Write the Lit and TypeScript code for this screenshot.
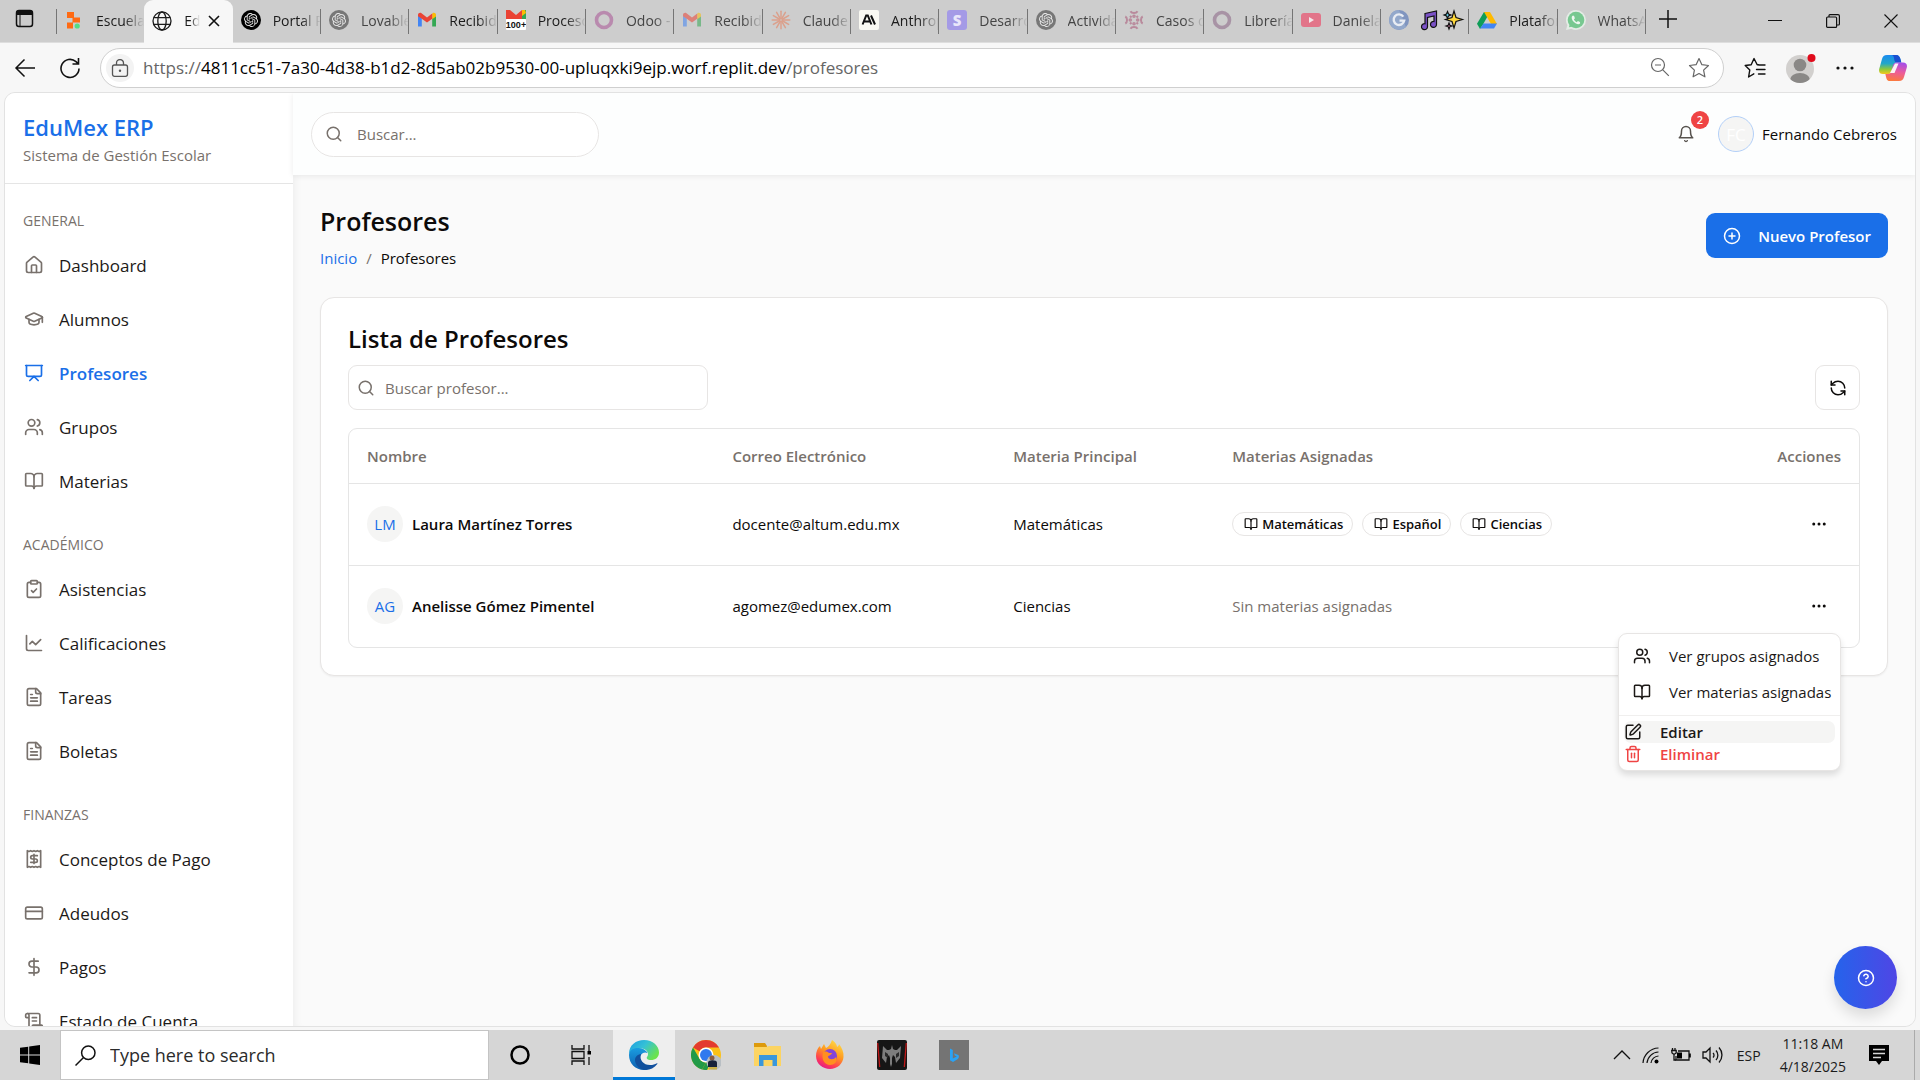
import { LitElement, html, svg, css, nothing, type TemplateResult } from "lit";
import { customElement, property, state } from "lit/decorators.js";
import { classMap } from "lit/directives/class-map.js";

/* ---------- Line icons (24 unit grid) ---------- */
const LINE: Record<string, TemplateResult> = {
  home: svg`<path d="M15 21v-8a1 1 0 0 0-1-1h-4a1 1 0 0 0-1 1v8"/><path d="M3 10a2 2 0 0 1 .709-1.528l7-5.999a2 2 0 0 1 2.582 0l7 5.999A2 2 0 0 1 21 10v9a2 2 0 0 1-2 2H5a2 2 0 0 1-2-2z"/>`,
  cap: svg`<path d="M21.42 10.922a1 1 0 0 0-.019-1.838L12.83 5.18a2 2 0 0 0-1.66 0L2.6 9.08a1 1 0 0 0 0 1.832l8.57 3.908a2 2 0 0 0 1.66 0z"/><path d="M22 10v6"/><path d="M6 12.5V16a6 3 0 0 0 12 0v-3.500"/>`,
  board: svg`<path d="M2 3h20"/><path d="M21 3v11a2 2 0 0 1-2 2H5a2 2 0 0 1-2-2V3"/><path d="m7 21 5-5 5 5"/>`,
  users: svg`<path d="M16 21v-2a4 4 0 0 0-4-4H6a4 4 0 0 0-4 4v2"/><circle cx="9" cy="7" r="4"/><path d="M22 21v-2a4 4 0 0 0-3-3.870"/><path d="M16 3.130a4 4 0 0 1 0 7.750"/>`,
  book: svg`<path d="M12 7v14"/><path d="M3 18a1 1 0 0 1-1-1V4a1 1 0 0 1 1-1h5a4 4 0 0 1 4 4 4 4 0 0 1 4-4h5a1 1 0 0 1 1 1v13a1 1 0 0 1-1 1h-6a3 3 0 0 0-3 3 3 3 0 0 0-3-3z"/>`,
  clipboard: svg`<rect width="8" height="4" x="8" y="2" rx="1"/><path d="M16 4h2a2 2 0 0 1 2 2v14a2 2 0 0 1-2 2H6a2 2 0 0 1-2-2V6a2 2 0 0 1 2-2h2"/><path d="m9 14 2 2 4-4"/>`,
  chart: svg`<path d="M3 3v16a2 2 0 0 0 2 2h16"/><path d="m7 13 3-3 4 4 6-6"/>`,
  file: svg`<path d="M15 2H6a2 2 0 0 0-2 2v16a2 2 0 0 0 2 2h12a2 2 0 0 0 2-2V7Z"/><path d="M14 2v4a2 2 0 0 0 2 2h4"/><path d="M10 9H8"/><path d="M16 13H8"/><path d="M16 17H8"/>`,
  receipt: svg`<path d="M4 2v20l2-1 2 1 2-1 2 1 2-1 2 1 2-1 2 1V2l-2 1-2-1-2 1-2-1-2 1-2-1-2 1Z"/><path d="M16 8h-6a2 2 0 1 0 0 4h4a2 2 0 1 1 0 4H8"/><path d="M12 17.500v-11"/>`,
  card: svg`<rect width="20" height="14" x="2" y="5" rx="2"/><path d="M2 10h20"/>`,
  dollar: svg`<path d="M12 2v20"/><path d="M17 5H9.500a3.500 3.500 0 0 0 0 7h5a3.500 3.500 0 0 1 0 7H6"/>`,
  scroll: svg`<path d="M15 12h-5"/><path d="M15 8h-5"/><path d="M19 17V5a2 2 0 0 0-2-2H4"/><path d="M8 21h12a2 2 0 0 0 2-2v-1a1 1 0 0 0-1-1H11a1 1 0 0 0-1 1v1a2 2 0 1 1-4 0V5a2 2 0 1 0-4 0v2a1 1 0 0 0 1 1h3"/>`,
  search: svg`<circle cx="11" cy="11" r="8"/><path d="m21 21-4.300-4.300"/>`,
  bell: svg`<path d="M6 8a6 6 0 0 1 12 0c0 7 3 9 3 9H3s3-2 3-9"/><path d="M10.300 21a1.940 1.940 0 0 0 3.400 0"/>`,
  plusCircle: svg`<circle cx="12" cy="12" r="10"/><path d="M8 12h8"/><path d="M12 8v8"/>`,
  refresh: svg`<path d="M21 12a9 9 0 0 0-9-9 9.750 9.750 0 0 0-6.740 2.740L3 8"/><path d="M3 3v5h5"/><path d="M3 12a9 9 0 0 0 9 9 9.750 9.750 0 0 0 6.740-2.740L21 16"/><path d="M16 16h5v5"/>`,
  dots: svg`<circle cx="12" cy="12" r="1"/><circle cx="19" cy="12" r="1"/><circle cx="5" cy="12" r="1"/>`,
  edit: svg`<path d="M12 3H5a2 2 0 0 0-2 2v14a2 2 0 0 0 2 2h14a2 2 0 0 0 2-2v-7"/><path d="M18.375 2.625a1 1 0 0 1 3 3l-9.013 9.014a2 2 0 0 1-.853.505l-2.873.84a.5.5 0 0 1-.62-.62l.84-2.873a2 2 0 0 1 .506-.852z"/>`,
  trash: svg`<path d="M3 6h18"/><path d="M19 6v14c0 1-1 2-2 2H7c-1 0-2-1-2-2V6"/><path d="M8 6V4c0-1 1-2 2-2h4c1 0 2 1 2 2v2"/><path d="M10 11v6"/><path d="M14 11v6"/>`,
  help: svg`<circle cx="12" cy="12" r="10"/><path d="M9.090 9a3 3 0 0 1 5.830 1c0 2-3 3-3 3"/><path d="M12 17h.01"/>`,
};

const line = (name: string, size = 18, weight = 2) => html`<svg
  width=${size} height=${size} viewBox="0 0 24 24" fill="none" stroke="currentColor"
  stroke-width=${weight} stroke-linecap="round" stroke-linejoin="round" aria-hidden="true">${LINE[name]}</svg>`;

/* ---------- Site marks in the tab strip (20 unit grid) ---------- */
const spin = (n: number, shape: TemplateResult) =>
  Array.from({ length: n }, (_, i) => svg`<g transform="rotate(${(360 / n) * i} 10 10)">${shape}</g>`);

const knot = (bg: string) => svg`<circle cx="10" cy="10" r="10" fill=${bg}/><path transform="translate(3 3) scale(.583)" fill="#e8e8e8" d="M22.2819 9.8211a5.9847 5.9847 0 0 0-.5157-4.9108 6.0462 6.0462 0 0 0-6.5098-2.9A6.0651 6.0651 0 0 0 4.9807 4.1818a5.9847 5.9847 0 0 0-3.9977 2.9 6.0462 6.0462 0 0 0 .7427 7.0966 5.98 5.98 0 0 0 .511 4.9107 6.051 6.051 0 0 0 6.5146 2.9001A5.9847 5.9847 0 0 0 13.2599 24a6.0557 6.0557 0 0 0 5.7718-4.2058 5.9894 5.9894 0 0 0 3.9977-2.9001 6.0557 6.0557 0 0 0-.7475-7.0729zm-9.022 12.6081a4.4755 4.4755 0 0 1-2.8764-1.0408l.1419-.0804 4.7783-2.7582a.7948.7948 0 0 0 .3927-.6813v-6.7369l2.02 1.1686a.071.071 0 0 1 .038.052v5.5826a4.504 4.504 0 0 1-4.4945 4.4944zm-9.6607-4.1254a4.4708 4.4708 0 0 1-.5346-3.0137l.142.0852 4.783 2.7582a.7712.7712 0 0 0 .7806 0l5.8428-3.3685v2.3324a.0804.0804 0 0 1-.0332.0615L9.74 19.9502a4.4992 4.4992 0 0 1-6.1408-1.6464zM2.3408 7.8956a4.485 4.485 0 0 1 2.3655-1.9728V11.6a.7664.7664 0 0 0 .3879.6765l5.8144 3.3543-2.0201 1.1685a.0757.0757 0 0 1-.071 0l-4.8303-2.7865A4.504 4.504 0 0 1 2.3408 7.872zm16.5963 3.8558L13.1038 8.364 15.1192 7.2a.0757.0757 0 0 1 .071 0l4.8303 2.7913a4.4944 4.4944 0 0 1-.6765 8.1042v-5.6772a.79.79 0 0 0-.407-.667zm2.0107-3.0231l-.142-.0852-4.7735-2.7818a.7759.7759 0 0 0-.7854 0L9.409 9.2297V6.8974a.0662.0662 0 0 1 .0284-.0615l4.8303-2.7866a4.4992 4.4992 0 0 1 6.6802 4.66zM8.3065 12.863l-2.02-1.1638a.0804.0804 0 0 1-.038-.0567V6.0742a4.4992 4.4992 0 0 1 7.3757-3.4537l-.142.0805L8.704 5.459a.7948.7948 0 0 0-.3927.6813zm1.0976-2.3654l2.602-1.4998 2.6069 1.4998v2.9994l-2.5974 1.4997-2.6067-1.4997Z"/>`;
const envelope = svg`<path d="M1 4.500v12h3.800V8.300z" fill="#4285f4"/><path d="M19 4.500v12h-3.800V8.300z" fill="#34a853"/><path d="M15.200 4.300v5L19 6.500V5c0-1.900-2.100-2.900-3.500-1.800z" fill="#fbbc04"/><path d="M1 5c0-1.900 2.100-2.900 3.500-1.800L10 7.400l5.200-4v5.300L10 12.600 4.800 8.700 1 6.300z" fill="#ea4335"/>`;

const MARK: Record<string, TemplateResult> = {
  blocks: svg`<path d="M3 2h7v6H3zM8.500 7.500H16v5H8.500zM3 12.500h6v6H3z" fill="#ff6a13"/><circle cx="13.200" cy="16" r="2.600" fill="#54dd84"/>`,
  globe: svg`<g fill="none" stroke="#1b1b1b" stroke-width="1.300"><circle cx="10" cy="10" r="9"/><ellipse cx="10" cy="10" rx="4.200" ry="9"/><path d="M1.800 6.700h16.400M1.800 13.300h16.400"/></g>`,
  knot: knot("#000"),
  knotDim: knot("#777"),
  mail: envelope,
  mailBadge: svg`<path d="M0 0h4l6 5 6-5h4v9H0z" fill="#ea4335"/><path d="M16 0h4v9h-4z" fill="#34a853"/><path d="M16 0h3l1 3-4 3z" fill="#fbbc04"/><rect y="9" width="20" height="11" rx="1" fill="#fff"/><text x="10" y="18" font-size="9" font-weight="700" text-anchor="middle" font-family="Liberation Sans, sans-serif" fill="#111">100+</text>`,
  ring: svg`<circle cx="10" cy="10" r="7.500" fill="none" stroke="#b98aae" stroke-width="3.600"/>`,
  ringDim: svg`<circle cx="10" cy="10" r="7.500" fill="none" stroke="#a893a5" stroke-width="3.600"/>`,
  burst: svg`<g stroke="#dba08c" stroke-width="1.500" stroke-linecap="round">${spin(12, svg`<path d="M10 8.500V1.200"/>`)}</g>`,
  anthropic: svg`<rect width="20" height="20" rx="2" fill="#faf9f2"/><path d="M3.600 14.500 7.200 5.500h1.600l3.600 9M5 11.500h6M12 5.500l4 9" fill="none" stroke="#111" stroke-width="2"/>`,
  letterS: svg`<rect width="20" height="20" rx="3" fill="#a49ae6"/><text x="10" y="15.500" font-size="15" font-weight="800" text-anchor="middle" font-family="Open Sans, sans-serif" fill="#e9e6fa">S</text>`,
  lattice: svg`<g fill="none" stroke="#b98a9c" stroke-width="2">${spin(4, svg`<path d="M6.500 1.300c1.200 2.300 5.800 2.300 7 0"/><circle cx="10" cy="6.300" r=".8"/>`)}<path d="m6 6 1.500 1.500M14 6l-1.500 1.500M6 14l1.500-1.500M14 14l-1.500-1.500"/></g>`,
  video: svg`<rect y="3" width="20" height="14" rx="3" fill="#e27489"/><path d="m8 7 5 3-5 3z" fill="#f4e6e8"/>`,
  letterG: svg`<circle cx="10" cy="10" r="10" fill="#8095bf"/><path d="M10 0a10 10 0 0 0-7 17A10 10 0 0 0 17 17z" fill="#93a8cb"/><path d="M14.300 6.600A5.300 5.300 0 1 0 15.200 10.600H10.500" fill="none" stroke="#e8ecf3" stroke-width="2.400"/>`,
  drive: svg`<path d="M7 2h6L6 14.500 3 19 0 13.800z" fill="#0f9d58"/><path d="M7 2h6l7 12h-6z" fill="#ffba00"/><path d="M6.500 13.500H20L17 18.500H3z" fill="#4285f4"/>`,
  chat: svg`<path d="M10 0a10 10 0 0 1 0 20c-1.700 0-3.300-.4-4.700-1.200L0 20l1.400-4.900A10 10 0 0 1 10 0z" fill="#e3ece5"/><circle cx="10" cy="10" r="8.300" fill="#77c890"/><path d="M3 17.200 3.800 13.500 7 16.500z" fill="#77c890"/><path d="M7 5.500c-2 1-1.500 4 .7 6.300s5.200 3.300 6.500 1.500l-.3-1.200-2-1-1.200 1.100c-1.200-.5-2.300-1.600-2.800-2.700l1-1.200-.8-2.300z" fill="#eef7f0"/>`,
};
const mark = (name: string) => html`<svg class="mark" width="20" height="20" viewBox="0 0 20 20" aria-hidden="true">${MARK[name]}</svg>`;

interface Tab { icon: string; label: string | TemplateResult; dim?: boolean; active?: boolean; faded?: boolean }
const music = html`<svg class="emoji" width="46" height="22" viewBox="0 0 46 22" aria-label="🎵✨"><g stroke="#111" stroke-width="1.200"><path d="M6 4.500 17.500 2v13.500a3 3 0 1 1-2.500-3V7L8.500 8.500v9.200a3 3 0 1 1-2.500-3z" fill="#7b52c7"/><path d="m35 2 2 6.500 6.500 2-6.500 2-2 6.500-2-6.500-6.500-2 6.500-2z" fill="#ffd83a"/><path d="m28.500 2.500 1 2.500 2.500 1-2.500 1-1 2.500-1-2.500L25 6l2.500-1z" fill="#66d4ef"/><path d="m30 14 .8 2.200 2.200.8-2.200.8-.8 2.200-.8-2.200L27 17l2.200-.8z" fill="#ff8fc1"/></g></svg>`;
const TABS: Tab[] = [
  { icon: "blocks", label: "Escuela" },
  { icon: "globe", label: "EduMex", active: true },
  { icon: "knot", label: "Portal P" },
  { icon: "knotDim", label: "Lovable", dim: true },
  { icon: "mail", label: "Recibidos" },
  { icon: "mailBadge", label: "Proceso" },
  { icon: "ring", label: "Odoo - ", dim: true },
  { icon: "mail", label: "Recibidos", dim: true, faded: true },
  { icon: "burst", label: "Claude", dim: true },
  { icon: "anthropic", label: "Anthropic" },
  { icon: "letterS", label: "Desarrollo", dim: true },
  { icon: "knotDim", label: "Actividad", dim: true },
  { icon: "lattice", label: "Casos de", dim: true },
  { icon: "ringDim", label: "Librería", dim: true },
  { icon: "video", label: "Daniela", dim: true },
  { icon: "letterG", label: music },
  { icon: "drive", label: "Plataforma" },
  { icon: "chat", label: "WhatsApp", dim: true },
];

const NAV = [
  { title: "GENERAL", items: [["home", "Dashboard"], ["cap", "Alumnos"], ["board", "Profesores"], ["users", "Grupos"], ["book", "Materias"]] },
  { title: "ACADÉMICO", items: [["clipboard", "Asistencias"], ["chart", "Calificaciones"], ["file", "Tareas"], ["file", "Boletas"]] },
  { title: "FINANZAS", items: [["receipt", "Conceptos de Pago"], ["card", "Adeudos"], ["dollar", "Pagos"], ["scroll", "Estado de Cuenta"]] },
];

const TEACHERS = [
  { initials: "LM", name: "Laura Martínez Torres", mail: "docente@altum.edu.mx", main: "Matemáticas", subjects: ["Matemáticas", "Español", "Ciencias"] },
  { initials: "AG", name: "Anelisse Gómez Pimentel", mail: "agomez@edumex.com", main: "Ciencias", subjects: [] as string[] },
];

const reset = css`
  *, *::before, *::after { box-sizing: border-box; }
  svg { display: block; flex: none; }
  button { font: inherit; color: inherit; border: 0; padding: 0; background: none; cursor: pointer; }
  input { font: inherit; color: inherit; border: 0; padding: 0; background: none; outline: 0; min-width: 0; }
  a { color: inherit; text-decoration: none; }
  h1, h2, p, ul { margin: 0; padding: 0; font-weight: inherit; }
  ul { list-style: none; }
`;

/* ---------- Browser chrome ---------- */
@customElement("browser-chrome")
class BrowserChrome extends LitElement {
  static styles = [reset, css`
    :host { display: block; background: #f7f7f7; color: #1b1b1b; }
    .strip { display: flex; height: 43px; background: #cdcdcd; border-bottom: 1px solid #dedede; }
    .workspaces { width: 56px; display: flex; align-items: center; padding: 0 0 4px 15px; }
    .tabs { display: flex; flex: 0 1 1590px; min-width: 0; }
    .tab { display: flex; align-items: center; gap: 12px; flex: 1 1 0; min-width: 0; height: 42px; padding: 0 0 2px 8px; font-size: 14px; position: relative; }
    .tab:not(.active)::after { content: ""; position: absolute; right: 0; top: 9px; width: 1px; height: 25px; background: #757575; }
    .tab:first-child::after { right: auto; left: 0; }
    .label { flex: 1; min-width: 0; overflow: hidden; white-space: nowrap; mask-image: linear-gradient(to right, #000 calc(100% - 20px), transparent); }
    .dim .label { color: #444; }
    .faded .mark { opacity: .55; }
    .emojis .label { mask-image: none; margin-right: -4px; }
    .emojis { gap: 10px; }
    .active { background: #f7f7f7; border-radius: 9px 9px 0 0; height: 43px; }
    .active .label { mask-image: linear-gradient(to right, #000 6px, transparent); flex: 0 0 16px; }
    .active .x { margin-left: -4px; }
    .new { width: 44px; display: grid; place-items: center; padding-bottom: 4px; }
    .window { margin-left: auto; display: flex; }
    .window button { width: 58px; display: grid; place-items: center; }
    .bar { display: flex; align-items: center; height: 49px; padding: 0 13px 0 14px; }
    .nav { display: flex; gap: 23px; margin-right: 19px; }
    .address { flex: 1; display: flex; align-items: center; height: 40px; border: 1px solid #cfcfcf; border-radius: 20px; background: #fff; padding: 0 13px 0 5px; }
    .lock { width: 28px; height: 28px; border-radius: 50%; background: #f3f3f3; display: grid; place-items: center; margin-right: 9px; }
    .url { flex: 1; font-size: 17px; color: #000; white-space: nowrap; }
    .url span { color: #666; }
    .in { display: flex; gap: 18px; color: #666; }
    .out { display: flex; align-items: center; gap: 20px; margin-left: 20px; }
    .out button:last-child { margin-left: 5px; }
  `];
  render() {
    return html`
      <div class="strip">
        <button class="workspaces" aria-label="Workspaces"><svg width="20" height="20" viewBox="0 0 20 20"><rect x="1.500" y="1.500" width="16" height="16" rx="2.500" fill="none" stroke="#111" stroke-width="1.500"/><path d="M1.500 6V3.500a2 2 0 0 1 2-2h12a2 2 0 0 1 2 2V6z" fill="#111"/><path d="M5 6v11" stroke="#111" stroke-width="1"/></svg></button>
        <div class="tabs" role="tablist">
          ${TABS.map((t) => html`<div role="tab" class=${classMap({ tab: true, dim: !!t.dim, active: !!t.active, faded: !!t.faded, emojis: t.icon === "letterG" })}>
            ${mark(t.icon)}<span class="label">${t.label}</span>
            ${t.active ? html`<button class="x" aria-label="Close tab"><svg width="12" height="12" viewBox="0 0 12 12"><path d="m1 1 10 10M11 1 1 11" stroke="#111" stroke-width="1.600"/></svg></button>` : nothing}
          </div>`)}
        </div>
        <button class="new" aria-label="New tab"><svg width="18" height="18" viewBox="0 0 18 18"><path d="M9 0v18M0 9h18" stroke="#111" stroke-width="1.500"/></svg></button>
        <div class="window">
          <button aria-label="Minimize"><svg width="14" height="14" viewBox="0 0 14 14"><path d="M0 6.500h14" stroke="#111"/></svg></button>
          <button aria-label="Restore"><svg width="14" height="14" viewBox="0 0 14 14"><g fill="none" stroke="#111" stroke-width="1.200"><rect x=".6" y="3" width="10" height="10.400" rx="1"/><path d="M3 3V1.500c0-.6.4-.9.900-.9H12c.8 0 1.400.6 1.400 1.400v8c0 .6-.3 1-.9 1h-1.900"/></g></svg></button>
          <button aria-label="Close"><svg width="14" height="14" viewBox="0 0 14 14"><path d="m.5.5 13 13m0-13-13 13" stroke="#111" stroke-width="1.100"/></svg></button>
        </div>
      </div>
      <div class="bar">
        <div class="nav">
          <button aria-label="Back"><svg width="22" height="22" viewBox="0 0 22 22"><path d="M21 11H2m8.500-8.500L2 11l8.500 8.500" fill="none" stroke="#111" stroke-width="1.500"/></svg></button>
          <button aria-label="Reload"><svg width="22" height="22" viewBox="0 0 22 22"><path d="M20 11.500A9 9 0 1 1 17 4.700l2.300 2.100M19.500 1v6h-6" fill="none" stroke="#111" stroke-width="1.600"/></svg></button>
        </div>
        <div class="address">
          <span class="lock"><svg width="18" height="18" viewBox="0 0 18 18"><g fill="none" stroke="#555" stroke-width="1.300"><rect x="1.500" y="6" width="15" height="11.300" rx="2"/><path d="M5.500 6V4a3.500 3.500 0 0 1 7 0v2"/></g><circle cx="9" cy="11.700" r="1.200" fill="#555"/></svg></span>
          <span class="url"><span>https://</span>4811cc51-7a30-4d38-b1d2-8d5ab02b9530-00-upluqxki9ejp.worf.replit.dev<span>/profesores</span></span>
          <span class="in">
            <svg width="20" height="20" viewBox="0 0 20 20"><g fill="none" stroke="#666" stroke-width="1.200"><circle cx="8" cy="8" r="6.500"/><path d="m12.800 12.800 6 6M5 8h6"/></g></svg>
            <svg width="22" height="22" viewBox="0 0 22 22"><path d="m11 1.500 2.900 6.200 6.600.8-4.900 4.600 1.300 6.700-5.900-3.300-5.900 3.300 1.300-6.700L1.500 8.500l6.600-.8z" fill="none" stroke="#666" stroke-width="1.200" stroke-linejoin="round"/></svg>
          </span>
        </div>
        <div class="out">
          <button aria-label="Favorites"><svg width="22" height="22" viewBox="0 0 22 22"><g fill="none" stroke="#111" stroke-width="1.400" stroke-linejoin="round" stroke-linecap="round"><path d="M14.500 7.700h-1.300L10 1.500 7.200 7.700l-6 .8 4.600 4.400L4.600 20l5.200-3.200"/><path d="M15 8h6M12.500 12.500H21M14.500 17H21"/></g></svg></button>
          <button aria-label="Profile"><svg width="30" height="32" viewBox="0 0 30 32"><circle cx="14" cy="17" r="14" fill="#d2d0ce"/><clipPath id="pc"><circle cx="14" cy="17" r="14"/></clipPath><g clip-path="url(#pc)" fill="#8a8886"><circle cx="14" cy="13" r="6.300"/><ellipse cx="14" cy="28" rx="10" ry="7"/></g><circle cx="25.500" cy="6" r="4" fill="#e00b1c"/></svg></button>
          <button aria-label="Settings"><svg width="18" height="4" viewBox="0 0 18 4"><g fill="#111"><circle cx="2" cy="2" r="1.600"/><circle cx="9" cy="2" r="1.600"/><circle cx="16" cy="2" r="1.600"/></g></svg></button>
          <button aria-label="Copilot"><svg width="28" height="26" viewBox="0 0 28 26">
            <defs><linearGradient id="ca" x1="0" y1="0" x2="0" y2="1"><stop offset="0" stop-color="#1b8af0"/><stop offset=".45" stop-color="#22a7c9"/><stop offset=".75" stop-color="#8fc93a"/><stop offset="1" stop-color="#f5c81c"/></linearGradient>
            <linearGradient id="cb" x1=".6" y1="0" x2=".4" y2="1"><stop offset="0" stop-color="#a64de8"/><stop offset=".5" stop-color="#ec5c9b"/><stop offset="1" stop-color="#fb7a3c"/></linearGradient></defs>
            <path d="M8 0h9c3 0 4 2 4.700 5l.6 2.500H19c-2.500 0-3.700 1-4.200 3L13 16c-.6 2-1.500 3-3.500 3H4c-3 0-4.500-2-3.800-5L3 4c.8-2.700 2-4 5-4z" fill="url(#ca)"/>
            <path d="M13 0h4c3 0 4 2 4.700 5l.6 2.500H18c-1.500 0-2.300-.8-2.700-2.500L15 3c-.4-1.800-.9-2.600-2-3z" fill="#1a4fd0"/>
            <path d="M20 26h-9c-3 0-3.500-2-4.200-5L6.400 19H9c2 0 3-1 3.500-3L14 10.500c.6-2 1.300-3 3.200-3H24c3 0 4.500 2 3.800 5L25 22c-.8 2.700-2 4-5 4z" fill="url(#cb)"/>
            <path d="M16 8.500h3.500L15.500 18H11z" fill="#fbf4f6"/></svg></button>
        </div>
      </div>`;
  }
}

/* ---------- Sidebar ---------- */
@customElement("side-nav")
class SideNav extends LitElement {
  @property() current = "Profesores";
  static styles = [reset, css`
    :host { display: block; background: #fff; overflow: hidden; min-height: 0; }
    .brand { height: 91px; padding: 18px 18px 0; border-bottom: 1px solid #e5e5e5; }
    .brand h1 { font-size: 22px; line-height: 32px; font-weight: 600; color: #1a6fe8; }
    .brand p { font-size: 15px; line-height: 24px; color: #78716c; }
    h2 { font-size: 14px; line-height: 20px; padding: 27px 18px 7px; color: #78716c; }
    a { display: flex; align-items: center; gap: 15px; height: 54px; padding: 0 19px; font-size: 17px; color: #1c1917; }
    a svg { color: #78716c; }
    .on { color: #1a6fe8; font-weight: 600; }
    .on svg { color: #1a6fe8; }
  `];
  render() {
    return html`
      <div class="brand"><h1>EduMex ERP</h1><p>Sistema de Gestión Escolar</p></div>
      <nav>${NAV.map((g) => html`<h2>${g.title}</h2><ul>${g.items.map(([icon, text]) => html`<li>
        <a href="#" class=${classMap({ on: text === this.current })}>${line(icon, 20)}${text}</a></li>`)}</ul>`)}</nav>`;
  }
}

/* ---------- Teachers page ---------- */
@customElement("teachers-page")
class TeachersPage extends LitElement {
  @state() private open = 1;
  static styles = [reset, css`
    :host { display: flex; flex-direction: column; min-width: 0; background: #fafafa; font-size: 15px; color: #0c0a09; position: relative; box-shadow: inset 8px 0 8px -6px rgba(0, 0, 0, .05); }
    .top { display: flex; align-items: center; height: 82px; padding: 0 18px; background: #fdfefe; box-shadow: 0 1px 6px rgba(0, 0, 0, .08); }
    .find { display: flex; align-items: center; height: 45px; border: 1px solid #e7e5e4; background: #fff; color: #78716c; }
    .find input { flex: 1; }
    .find input::placeholder { color: #78716c; opacity: 1; }
    .find.round { width: 288px; border-radius: 23px; padding: 0 13px; gap: 14px; }
    .find.box { width: 360px; border-radius: 9px; padding: 0 8px; gap: 10px; }
    .user { margin-left: auto; display: flex; align-items: center; gap: 8px; }
    .bell { position: relative; width: 36px; height: 36px; display: grid; place-items: center; margin-right: 6px; color: #57534e; }
    .count { position: absolute; top: -5px; right: -5px; width: 18px; height: 18px; border-radius: 50%; background: #ef4444; color: #fff; font-size: 11px; line-height: 18px; font-weight: 600; }
    .face { flex: none; width: 36px; height: 36px; border-radius: 50%; background: #f5f5f4; color: #1a6fe8; display: grid; place-items: center; }
    .user .face { color: #fff; border: 1px solid #b3d0f8; font-size: 17px; }
    main { padding: 26px 27px; }
    .head { display: flex; justify-content: space-between; align-items: center; margin-bottom: 27px; }
    .head h1 { font-size: 25px; line-height: 40px; font-weight: 600; }
    .crumbs { display: flex; gap: 9px; line-height: 24px; margin-top: 5px; }
    .crumbs a { color: #1a6fe8; }
    .crumbs i { font-style: normal; color: #78716c; }
    .primary { display: flex; align-items: center; gap: 17px; height: 45px; padding: 0 17px; border-radius: 9px; background: #1a6fe8; color: #fff; font-weight: 600; }
    .card { background: #fff; border: 1px solid #e7e5e4; border-radius: 14px; box-shadow: 0 1px 2px rgba(0, 0, 0, .05); padding: 21px 27px 27px; }
    .card h2 { font-size: 24px; line-height: 40px; font-weight: 600; margin-bottom: 6px; }
    .tools { display: flex; justify-content: space-between; margin-bottom: 18px; }
    .refresh { width: 45px; height: 45px; border: 1px solid #e7e5e4; border-radius: 9px; display: grid; place-items: center; }
    .frame { border: 1px solid #e5e5e5; border-radius: 9px; }
    table { width: 100%; border-collapse: collapse; table-layout: fixed; }
    th, td { text-align: left; padding: 0 18px; white-space: nowrap; }
    th { height: 54px; font-weight: 600; color: #78716c; }
    td { height: 82px; border-top: 1px solid #e5e5e5; }
    .c1 { width: 24.2%; } .c2 { width: 18.6%; } .c3 { width: 14.5%; }
    .act { text-align: right; }
    .person { display: flex; align-items: center; gap: 9px; font-weight: 600; }
    .person .face { font-weight: 400; }
    .badges { display: flex; gap: 9px; }
    .badge { display: flex; align-items: center; gap: 4px; height: 24px; padding: 0 9px 0 11px; border: 1px solid #e7e5e4; border-radius: 12px; font-size: 13px; font-weight: 600; }
    .muted { color: #78716c; }
    .spot { position: relative; display: inline-block; vertical-align: middle; }
    .more { width: 45px; height: 45px; display: grid; place-items: center; }
    .menu { position: absolute; z-index: 2; right: 0; top: 49px; width: 223px; padding: 4px 5px 5px; background: #fff; border: 1px solid #e7e5e4; border-radius: 9px; box-shadow: 0 4px 6px rgba(0, 0, 0, .12); text-align: left; }
    .menu button { display: flex; align-items: center; gap: 18px; width: 100%; height: 36px; padding: 0 9px; color: #1c1917; }
    .menu hr { height: 1px; border: 0; margin: 5px -5px; background: #f0efee; }
    .menu .tight { height: 22px; padding: 0; font-weight: 600; border-radius: 7px; }
    .menu .hover { background: #f5f5f4; }
    .menu .danger { color: #ef4444; }
    .fab { position: absolute; right: 18px; bottom: 17px; width: 63px; height: 63px; border-radius: 50%; background: linear-gradient(to right, #2563eb, #4f46e5); color: #fff; display: grid; place-items: center; box-shadow: 0 8px 14px rgba(0, 0, 0, .12); }
  `];
  render() {
    return html`
      <header class="top">
        <label class="find round">${line("search", 18)}<input type="search" placeholder="Buscar..." aria-label="Buscar" /></label>
        <div class="user">
          <button class="bell" aria-label="Notificaciones">${line("bell", 18)}<span class="count">2</span></button>
          <span class="face">FC</span><span>Fernando Cebreros</span>
        </div>
      </header>
      <main>
        <div class="head">
          <div><h1>Profesores</h1><nav class="crumbs"><a href="#">Inicio</a><i>/</i><span>Profesores</span></nav></div>
          <button class="primary">${line("plusCircle", 18)}Nuevo Profesor</button>
        </div>
        <section class="card">
          <h2>Lista de Profesores</h2>
          <div class="tools">
            <label class="find box">${line("search", 18)}<input type="search" placeholder="Buscar profesor..." aria-label="Buscar profesor" /></label>
            <button class="refresh" aria-label="Actualizar">${line("refresh", 18)}</button>
          </div>
          <div class="frame"><table>
            <thead><tr><th class="c1">Nombre</th><th class="c2">Correo Electrónico</th><th class="c3">Materia Principal</th><th>Materias Asignadas</th><th class="act">Acciones</th></tr></thead>
            <tbody>${TEACHERS.map((t, i) => html`<tr>
              <td><div class="person"><span class="face">${t.initials}</span>${t.name}</div></td>
              <td>${t.mail}</td><td>${t.main}</td>
              <td>${t.subjects.length
                ? html`<div class="badges">${t.subjects.map((s) => html`<span class="badge">${line("book", 14)}${s}</span>`)}</div>`
                : html`<span class="muted">Sin materias asignadas</span>`}</td>
              <td class="act"><div class="spot">
                <button class="more" aria-label="Acciones" @click=${() => (this.open = this.open === i ? -1 : i)}>${line("dots", 18)}</button>
                ${this.open === i ? this.menu() : nothing}
              </div></td>
            </tr>`)}</tbody>
          </table></div>
        </section>
      </main>
      <button class="fab" aria-label="Ayuda">${line("help", 18)}</button>`;
  }
  private menu() {
    return html`<div class="menu" role="menu">
      <button role="menuitem">${line("users", 18)}Ver grupos asignados</button>
      <button role="menuitem">${line("book", 18)}Ver materias asignadas</button>
      <hr />
      <button role="menuitem" class="tight hover">${line("edit", 18)}Editar</button>
      <button role="menuitem" class="tight danger">${line("trash", 18)}Eliminar</button>
    </div>`;
  }
}

/* ---------- Desktop taskbar ---------- */
const APPS: Record<string, TemplateResult> = {
  Cortana: svg`<circle cx="15" cy="15" r="8.500" fill="none" stroke="#000" stroke-width="2.500"/>`,
  "Task View": svg`<g fill="none" stroke="#111" stroke-width="1.300"><path d="M5 5v4h12V5M5 25v-4h12v4M5 11.500h12v7H5zM22 5v6M22 17v8"/></g><rect x="20.500" y="11" width="3.500" height="3.500"/>`,
  Edge: svg`<defs><linearGradient id="e1" x1="0" y1="0" x2="1" y2=".6"><stop offset="0" stop-color="#1b9de2"/><stop offset=".5" stop-color="#35c1d6"/><stop offset="1" stop-color="#6be34c"/></linearGradient><linearGradient id="e2" x1="0" y1="0" x2="0" y2="1"><stop offset="0" stop-color="#1a9de0"/><stop offset="1" stop-color="#0d5fb0"/></linearGradient></defs>
    <path d="M0 14C0 5 7 0 15 0c9 0 15 6 15 12.500 0 5-3.800 7.500-8 7.500-3.500 0-5-1.500-4-3 .8-1 1-2 1-3 0-3-3-5.500-7-5.500C6 8.500 1 11 0 14z" fill="url(#e1)"/>
    <path d="M0 15C0 10 5 7.500 10 8c4 .3 7.500 2.500 8.500 5-4-2-8 1.500-7.500 6 .5 5 4.500 9.500 9 9.800-2 .9-3.500 1.200-5 1.200C6.500 30 0 23.500 0 15z" fill="url(#e2)"/>
    <path d="M12 14c-2 6 2.500 11 9 11 3 0 5-.8 6.500-1.600.8-.4 1.200.1.800.7C25.500 28 21 30 17 30c-6.500-.4-11-5-11-10 0-3 2.500-5.500 6-6z" fill="#11509d"/>`,
  Chrome: svg`<circle cx="15" cy="15" r="15" fill="#fbc116"/><path d="M15 0a15 15 0 0 1 13 7.500H15a7.500 7.500 0 0 0-6.500 3.700L2 7.500A15 15 0 0 1 15 0z" fill="#e33b2e"/><path d="M2 7.500 8.500 18.700A7.500 7.500 0 0 0 15 22.500l-4 7A15 15 0 0 1 2 7.500z" fill="#229a48"/><path d="m15 22.500-4 7a15 15 0 0 0 5 .5l5.500-11.200z" fill="#229a48"/><circle cx="15" cy="15" r="7.500" fill="#fff"/><circle cx="15" cy="15" r="6" fill="#3079ee"/><circle cx="23" cy="22.500" r="7.500" fill="#b9bfc4"/><circle cx="21" cy="18" r="2.500" fill="#8a5c40"/><path d="M17 22.500c0-3 9-3 9 0V27h-9z" fill="#17223b"/><path d="M18 27h8v2.500h-8z" fill="#c9b04a"/>`,
  Explorer: svg`<path d="M1 3h11l2 3v4H1z" fill="#dd9a0c"/><path d="M1 7h12l3-1h12v20H1z" fill="#fcd462"/><path d="M6 26V15h18v11h-4.500v-6h-9v6z" fill="#3a97dc"/>`,
  Firefox: svg`<defs><linearGradient id="f1" x1=".8" y1="0" x2=".3" y2="1"><stop offset="0" stop-color="#ffe14a"/><stop offset=".45" stop-color="#ff9a1f"/><stop offset=".8" stop-color="#ff3b54"/><stop offset="1" stop-color="#e01b8c"/></linearGradient></defs><path d="M17 0c4 3 5 5 5 7 2-1 2-3 2-3 3 4 5 8 4.500 13C28 24 22 29 15 29S1 24 1 16c0-4 1.500-8 4-10l1 3 3-5 2 4c2-1 5-4 6-8z" fill="url(#f1)"/><circle cx="15" cy="16" r="7" fill="#8244d8"/><path d="M8 12c3-1 5 0 6 1h3c-1 3-4 2-4 4 1 3 6 3 8 0 2 5-2 8-6 8-5 0-9-5-7-13z" fill="#ff8f20"/>`,
  PredatorSense: svg`<rect width="30" height="30" rx="2" fill="#161616"/><path d="m.7 3 2 24M29.300 3l-2 24" stroke="#c01818" stroke-width="1.300"/><path d="m6 6 4 4h2l2-1 1-4 1 4 2 1h2l4-4-1 12-4 5-1-6-2-2-1 3v6l-1 3-1-3v-6l-1-3-2 2-1 6-4-5z" fill="#7d7d7d"/><path d="m8 12 3 2v4l-3-2zM22 12l-3 2v4l3-2z" fill="#2a2a2a"/>`,
  Bing: svg`<rect width="30" height="30" fill="#747474"/><path d="M11 8.500 13.800 10v8.500l4-2-2-1-.8-2.300 4.300 1.800c1 .7.8 3-.5 4L14 22 11 20.300z" fill="#2aa3f5"/>`,
};

@customElement("task-bar")
class TaskBar extends LitElement {
  static styles = [reset, css`
    :host { display: flex; height: 50px; background: #d6d6d6; color: #1b1b1b; }
    .start { width: 60px; display: grid; place-items: center; }
    .search { width: 429px; display: flex; align-items: center; gap: 14px; padding: 0 14px; background: #fff; border: 1px solid #c4c4c4; }
    .search input { flex: 1; font-size: 18px; }
    .search input::placeholder { color: #2b2b2b; opacity: 1; }
    .app { width: 62px; display: grid; place-items: center; border-bottom: 3px solid transparent; border-top: 3px solid transparent; }
    .here { background: #eee; background-clip: padding-box; border-bottom-color: #0078d7; border-top: 0; padding-top: 3px; }
    .tray { margin-left: auto; display: flex; align-items: center; gap: 11px; font-size: 14px; }
    .lang { margin: 0 8px 0 2px; }
    .clock { line-height: 23px; text-align: center; }
    .notes { margin: 0 14px 0 12px; }
    .edge { width: 6px; align-self: stretch; border-left: 1px solid #aaa; }
  `];
  render() {
    return html`
      <button class="start" aria-label="Start"><svg width="20" height="20" viewBox="0 0 20 20"><path d="m0 2.800 8.200-1.100v7.800H0zM9.200 1.500 20 0v9.500H9.200zM0 10.500h8.200v7.800L0 17.200zM9.200 10.500H20V20L9.200 18.500z"/></svg></button>
      <label class="search"><svg width="21" height="21" viewBox="0 0 21 21"><g fill="none" stroke="#111" stroke-width="1.500"><circle cx="13.300" cy="7.700" r="6.700"/><path d="M8.500 12.500.5 20.500"/></g></svg><input placeholder="Type here to search" aria-label="Type here to search" /></label>
      ${Object.entries(APPS).map(([name, art]) => html`<button class=${classMap({ app: true, here: name === "Edge" })} aria-label=${name}><svg width="30" height="30" viewBox="0 0 30 30">${art}</svg></button>`)}
      <div class="tray">
        <svg width="18" height="18" viewBox="0 0 18 18"><path d="m1 13 8-8 8 8" fill="none" stroke="#111" stroke-width="1.300"/></svg>
        <svg width="18" height="18" viewBox="0 0 18 18"><g fill="none" stroke="#111" stroke-width="1.200"><path d="M1 17A16 16 0 0 1 16.500 2M5 17A12 12 0 0 1 16.500 6M9 17a8 8 0 0 1 7.500-7"/></g><circle cx="14.500" cy="15.500" r="2"/></svg>
        <svg width="20" height="16" viewBox="0 0 20 16"><g fill="none" stroke="#111" stroke-width="1.300"><path d="M7 4h11v9H5V9"/><path d="M1.500 1v2.500M4 1v2.500M.7 3.500h4.500V6L3 7.500 1 6zM3 7.500V13h2"/></g><path d="M6 5.500h5v6H6zM18 6.500h1.800v4H18z"/></svg>
        <svg width="22" height="20" viewBox="0 0 22 20"><g fill="none" stroke="#111" stroke-width="1.300"><path d="M1 7h3l4-4v14l-4-4H1zM11 8a3 3 0 0 1 0 4.500M14 5.500a7 7 0 0 1 0 9.500M17 2.500a11 11 0 0 1 0 15"/></g></svg>
        <span class="lang">ESP</span>
        <div class="clock"><div>11:18 AM</div><div>4/18/2025</div></div>
        <svg class="notes" width="20" height="20" viewBox="0 0 20 20"><path d="M0 0h20v16h-7l-3 4-3-4H0z"/><path d="M4 4.500h12M4 8.500h12M4 12.500h8" stroke="#d6d6d6" stroke-width="1.300"/></svg>
        <span class="edge"></span>
      </div>`;
  }
}

@customElement("app-root")
class AppRoot extends LitElement {
  static styles = [reset, css`
    :host { display: flex; flex-direction: column; height: 100vh; overflow: hidden; background: #f7f7f7; font-family: "Open Sans", "Noto Sans", sans-serif; }
    browser-chrome, task-bar { flex: none; }
    .view { flex: 1; min-height: 0; display: grid; grid-template-columns: 288px minmax(0, 1fr); grid-template-rows: minmax(0, 1fr); margin: 0 4px 3px; border: 1px solid #e2e2e2; border-radius: 11px; overflow: hidden; }
  `];
  render() {
    return html`<browser-chrome></browser-chrome>
      <div class="view"><side-nav></side-nav><teachers-page></teachers-page></div>
      <task-bar></task-bar>`;
  }
}
